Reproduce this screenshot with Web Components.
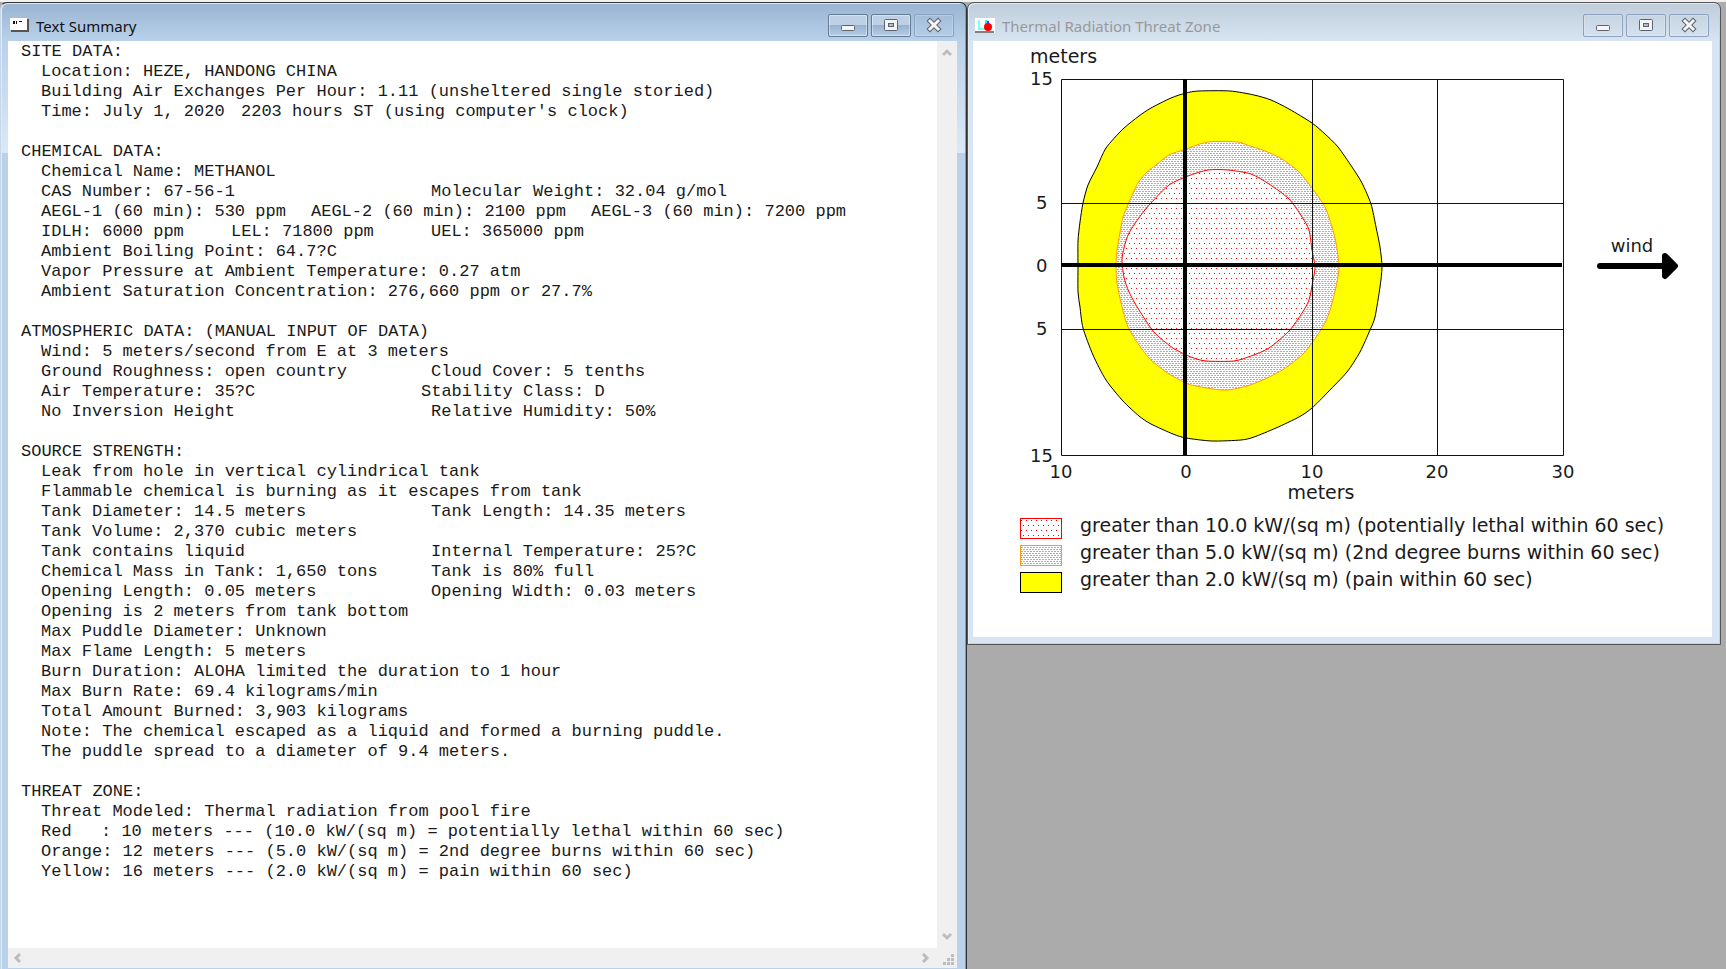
<!DOCTYPE html>
<html lang="en">
<head>
<meta charset="utf-8">
<title>ALOHA</title>
<style>
html, body {
    height: 100%;
    margin: 0;
}
body {
    background-color: #ababab;
    overflow: hidden;
}
</style>
</head>
<body>
<mdi-desktop>
    <mdi-window class="summary" active heading="Text Summary">
        <svg slot="icon" width="19" height="15" viewBox="0 0 19 15">
            <path d="M0 0h17v12H0z" fill="#fff"/>
            <path d="M17 1h2v13H1v-2h16z" fill="#555"/>
            <path d="M3 3h2v3H3zM6 3h1v3H6zM9 3h3v1H9z" fill="#111"/>
        </svg>
        <text-report></text-report>
    </mdi-window>
    <mdi-window class="threat" heading="Thermal Radiation Threat Zone">
        <svg slot="icon" width="20" height="15" viewBox="0 0 20 15">
            <path d="M0 0h20v15H0z" fill="#fff"/>
            <path d="M4 2v10M4 11h6" stroke="#0ff" stroke-width="1" fill="none"/>
            <path d="M11 2v5" stroke="#0ff" stroke-width="2"/>
            <path d="M13 3v10" stroke="#a0f" stroke-width="2"/>
            <circle cx="13" cy="9" r="4" fill="#f00"/>
            <path d="M0 14h19" stroke="#000" stroke-width="1"/>
        </svg>
        <threat-plot></threat-plot>
        <threat-legend></threat-legend>
    </mdi-window>
</mdi-desktop>

<script>
'use strict'

class MdiDesktop extends HTMLElement {

    constructor() {
        super();

        const shadow = this.attachShadow({mode: 'open'});

        shadow.innerHTML = `
            <style>
            :host {
                display: grid;
                grid-template-columns: 967fr 754fr 5px;
                align-items: start;
                height: 100%;
                box-sizing: border-box;
                border-top: 2px solid #f0f0f0;
            }
            ::slotted(.summary) {
                height: 100%;
            }
            </style>
            <slot></slot>
        `;
    }
}

class MdiWindow extends HTMLElement {

    constructor() {
        super();

        const shadow = this.attachShadow({mode: 'open'});

        shadow.innerHTML = `
            <style>
            :host {
                --frame: #d7e4f2;
                --top: #bfcddb;
                --ink: #999;
                display: flex;
                flex-direction: column;
                box-sizing: border-box;
                padding: 0 8px 7px 5px;
                border: 1px solid #555;
                border-radius: 7px 7px 0 0;
                background: linear-gradient(var(--top), var(--frame) 38px);
                box-shadow: inset 1px 1px #e3ebf3, inset -1px -1px #c5d2e0;
                min-width: 0;
            }
            :host([active]) {
                --frame: #b9d1ea;
                --top: #99b4d1;
                --ink: #111;
                padding: 0 9px 1px 7px;
                border-color: #333;
                border-bottom: 0;
                border-left-color: #c5d8ec;
                background: linear-gradient(var(--top), var(--frame) 38px, #dce8f5 150px, var(--frame) 150px);
                box-shadow: inset 1px 1px #dce8f4, inset -1px 0 #22c4dc;
            }
            header {
                display: flex;
                align-items: center;
                gap: 7px;
                height: 38px;
                padding: 6px 3px 0 2px;
                box-sizing: border-box;
                flex: none;
            }
            h1 {
                flex: 1;
                margin: 0;
                padding-top: 2px;
                font: 15px/24px "Noto Sans", "Open Sans", sans-serif;
                color: var(--ink);
                white-space: nowrap;
            }
            nav {
                display: flex;
                gap: 3px;
            }
            button {
                display: grid;
                place-items: center;
                width: 40px;
                height: 23px;
                padding: 0;
                border: 1px solid #8ea1c0;
                border-radius: 2px;
                background: none;
                box-shadow: inset 0 0 0 1px #ffffff33;
            }
            :host([active]) button:not(:last-child) {
                border-color: #667a94;
                background: linear-gradient(#bdd0e5 50%, #98b2cf 50%, #b7cee7);
                box-shadow: inset 0 0 0 1px #ffffff66;
            }
            main {
                flex: 1;
                min-height: 0;
                display: flex;
                flex-direction: column;
                background-color: #fff;
            }
            </style>
            <header>
                <slot name="icon"></slot>
                <h1></h1>
                <nav>
                    <button aria-label="Minimize">
                        <svg width="16" height="16"><rect x="1.5" y="8.5" width="13" height="5" rx="1" fill="#f5f5f5" stroke="#5c6370"/></svg>
                    </button>
                    <button aria-label="Maximize">
                        <svg width="16" height="16">
                            <rect x="1.5" y="2.5" width="13" height="11" rx="1" fill="#f5f5f5" stroke="#5c6370"/>
                            <rect x="5.5" y="6.5" width="5" height="3" fill="#a9bdd4" stroke="#5c6370"/>
                        </svg>
                    </button>
                    <button aria-label="Close">
                        <svg width="16" height="16" fill="none">
                            <path d="M4 4l8 8M12 4l-8 8" stroke="#5c6370" stroke-width="5" stroke-linecap="square"/>
                            <path d="M4 4l8 8M12 4l-8 8" stroke="#f5f5f5" stroke-width="3" stroke-linecap="square"/>
                        </svg>
                    </button>
                </nav>
            </header>
            <main><slot></slot></main>
        `;

        this.heading = shadow.querySelector('h1');
    }

    connectedCallback() {
        this.heading.textContent = this.getAttribute('heading');
    }
}

const REPORT = `SITE DATA:
  Location: HEZE, HANDONG CHINA
  Building Air Exchanges Per Hour: 1.11 (unsheltered single storied)
  Time: July 1, 2020  2203 hours ST (using computer's clock)

CHEMICAL DATA:
  Chemical Name: METHANOL
  CAS Number: 67-56-1                    Molecular Weight: 32.04 g/mol
  AEGL-1 (60 min): 530 ppm   AEGL-2 (60 min): 2100 ppm   AEGL-3 (60 min): 7200 ppm
  IDLH: 6000 ppm     LEL: 71800 ppm      UEL: 365000 ppm
  Ambient Boiling Point: 64.7?C
  Vapor Pressure at Ambient Temperature: 0.27 atm
  Ambient Saturation Concentration: 276,660 ppm or 27.7%

ATMOSPHERIC DATA: (MANUAL INPUT OF DATA)
  Wind: 5 meters/second from E at 3 meters
  Ground Roughness: open country         Cloud Cover: 5 tenths
  Air Temperature: 35?C                 Stability Class: D
  No Inversion Height                    Relative Humidity: 50%

SOURCE STRENGTH:
  Leak from hole in vertical cylindrical tank
  Flammable chemical is burning as it escapes from tank
  Tank Diameter: 14.5 meters             Tank Length: 14.35 meters
  Tank Volume: 2,370 cubic meters
  Tank contains liquid                   Internal Temperature: 25?C
  Chemical Mass in Tank: 1,650 tons      Tank is 80% full
  Opening Length: 0.05 meters            Opening Width: 0.03 meters
  Opening is 2 meters from tank bottom
  Max Puddle Diameter: Unknown
  Max Flame Length: 5 meters
  Burn Duration: ALOHA limited the duration to 1 hour
  Max Burn Rate: 69.4 kilograms/min
  Total Amount Burned: 3,903 kilograms
  Note: The chemical escaped as a liquid and formed a burning puddle.
  The puddle spread to a diameter of 9.4 meters.

THREAT ZONE:
  Threat Modeled: Thermal radiation from pool fire
  Red   : 10 meters --- (10.0 kW/(sq m) = potentially lethal within 60 sec)
  Orange: 12 meters --- (5.0 kW/(sq m) = 2nd degree burns within 60 sec)
  Yellow: 16 meters --- (2.0 kW/(sq m) = pain within 60 sec)`;

// width of one character cell of the report
const CELL = 10;

class TextReport extends HTMLElement {

    constructor() {
        super();

        const shadow = this.attachShadow({mode: 'open'});

        shadow.innerHTML = `
            <style>
            :host {
                flex: 1;
                min-height: 0;
                display: grid;
                grid-template: minmax(0, 1fr) 20px / minmax(0, 1fr) 20px;
                background-color: #f0f0f0;
            }
            .report {
                padding: 1px 0 0 13px;
                overflow: hidden;
                background-color: #fff;
                color: #1a1a1a;
                font: 17px/20px "Liberation Mono", monospace;
                white-space: pre;
            }
            .line {
                display: flex;
                min-height: 20px;
            }
            .line span {
                flex: none;
            }
            .bar {
                display: flex;
                justify-content: space-between;
                align-items: center;
                padding: 7px 4px;
            }
            .bar.across {
                padding: 0 7px 0 5px;
            }
            .bar.down {
                flex-direction: column;
            }
            button {
                display: flex;
                padding: 0;
                border: 0;
                background: none;
            }
            path {
                fill: none;
                stroke: #bdbdbd;
                stroke-width: 3;
            }
            .grip {
                margin: 6px 0 0 6px;
            }
            .grip path {
                fill: #bdbdbd;
                stroke: none;
            }
            </style>
            <div class="report"></div>
            <div class="bar down">
                <button aria-label="Scroll up"><svg width="10" height="9"><path d="M1 7l4-4 4 4"/></svg></button>
                <button aria-label="Scroll down"><svg width="10" height="9"><path d="M1 2l4 4 4-4"/></svg></button>
            </div>
            <div class="bar across">
                <button aria-label="Scroll left"><svg width="9" height="10"><path d="M7 1L3 5l4 4"/></svg></button>
                <button aria-label="Scroll right"><svg width="9" height="10"><path d="M2 1l4 4-4 4"/></svg></button>
            </div>
            <svg class="grip" width="11" height="11"><path d="M8 0h3v3H8zM8 4h3v3H8zM4 4h3v3H4zM8 8h3v3H8zM4 8h3v3H4zM0 8h3v3H0z"/></svg>
        `;

        // text followed by a run of spaces becomes a column, so the next one starts on its cell
        shadow.querySelector('.report').innerHTML = REPORT.split('\n').map(line => {
            const indent = line.search(/\S|$/) * CELL;
            const parts = line.trim().match(/\S+(?: \S+)* */g) || [];
            const spans = parts.map((part, i) => {
                const width = i < parts.length - 1 ? `${part.length * CELL}px` : 'auto';
                return `<span style="width: ${width}">${part.trimEnd()}</span>`;
            });

            return `<div class="line" style="padding-left: ${indent}px">${spans.join('')}</div>`;
        }).join('');
    }
}

// hatch fills, shared by the plot and the legend swatches
const HATCHES = `
    <defs>
        <pattern id="red" width="5" height="10" patternUnits="userSpaceOnUse">
            <path d="M0 0h5v10H0z" fill="#fff"/>
            <path d="M1 2h1v1H1zM3 7h1v1H3z" fill="#f00"/>
        </pattern>
        <pattern id="orange" width="3" height="4" patternUnits="userSpaceOnUse">
            <path d="M0 0h3v4H0z" fill="#fff"/>
            <path d="M0 0h2v1H0zM1 2h2v1H1z" fill="#ffa020"/>
        </pattern>
    </defs>
`;

const YELLOW = [
    [226, 50], [257, 50], [281, 54], [298, 59], [316, 68], [339, 82], [352, 93], [365, 106],
    [379, 126], [389, 142], [398, 163], [403, 186], [407, 206], [409, 226], [407, 246], [402, 276],
    [397, 289], [387, 311], [374, 331], [355, 351], [339, 367], [326, 376], [303, 387], [281, 396],
    [268, 399], [239, 400], [213, 397], [200, 393], [178, 383], [166, 375], [150, 360], [133, 339],
    [120, 314], [110, 287], [107, 266], [105, 251], [105, 226], [105, 200], [107, 181], [110, 162],
    [115, 144], [124, 126], [133, 107], [150, 88], [166, 75], [178, 67], [198, 57], [213, 52]
];
const ORANGE = [
    [235, 101], [265, 101], [274, 104], [292, 110], [309, 118], [326, 131], [339, 147], [352, 166],
    [359, 186], [363, 202], [366, 226], [363, 246], [358, 266], [352, 282], [339, 302], [329, 314],
    [311, 328], [292, 338], [274, 345], [255, 349], [240, 348], [218, 344], [211, 341], [196, 333],
    [178, 319], [166, 304], [155, 286], [149, 266], [144, 242], [143, 226], [144, 209], [147, 192],
    [150, 176], [157, 159], [165, 142], [174, 131], [183, 124], [196, 114], [213, 108]
];
const RED = [
    [235, 129], [255, 129], [278, 133], [296, 143], [316, 158], [329, 176], [336, 189], [339, 209],
    [342, 226], [340, 239], [336, 259], [329, 272], [316, 290], [296, 307], [278, 315], [261, 320],
    [233, 320], [218, 316], [200, 307], [181, 291], [166, 269], [156, 251], [151, 236], [149, 219],
    [151, 207], [156, 192], [168, 174], [178, 162], [196, 144], [215, 135]
];

// closed smooth curve through the points
function contour(points) {
    const n = points.length;
    const at = i => points[(i + n) % n];
    let d = `M${points[0]}`;

    points.forEach((p, i) => {
        const prev = at(i - 1);
        const next = at(i + 1);
        const after = at(i + 2);
        const c1 = [p[0] + (next[0] - prev[0]) / 8, p[1] + (next[1] - prev[1]) / 8];
        const c2 = [next[0] - (after[0] - p[0]) / 8, next[1] - (after[1] - p[1]) / 8];
        d += `C${c1} ${c2} ${next}`;
    });

    return d + 'z';
}

class ThreatPlot extends HTMLElement {

    constructor() {
        super();

        const shadow = this.attachShadow({mode: 'open'});

        shadow.innerHTML = `
            <style>
            :host {
                display: block;
            }
            svg {
                display: block;
                width: 100%;
            }
            text {
                font: 18px "DejaVu Sans", sans-serif;
                fill: #1a1a1a;
            }
            .unit {
                font-size: 19px;
            }
            .middle {
                text-anchor: middle;
            }
            .grid {
                fill: none;
                stroke: #111;
            }
            .axis {
                stroke: #000;
                stroke-width: 4;
            }
            </style>
            <svg viewBox="0 0 739 466" role="img" aria-label="Thermal radiation threat zone, meters">
                ${HATCHES}
                <path fill="#ff0" stroke="#000" d="${contour(YELLOW)}"/>
                <path fill="url(#orange)" stroke="#ff9a10" d="${contour(ORANGE)}"/>
                <path fill="url(#red)" stroke="#f00" d="${contour(RED)}"/>
                <path class="grid" d="M88.5 38.5h502v376h-502zM339.5 38v377M464.5 38v377M88 162.5h502M88 288.5h502"/>
                <path class="axis" d="M212 38v376M88 224h501"/>
                <text class="unit" x="57" y="22">meters</text>
                <g>
                    <text x="57" y="44">15</text>
                    <text x="63" y="168">5</text>
                    <text x="63" y="231">0</text>
                    <text x="63" y="294">5</text>
                    <text x="57" y="421">15</text>
                </g>
                <g class="middle">
                    <text x="88" y="437">10</text>
                    <text x="213" y="437">0</text>
                    <text x="339" y="437">10</text>
                    <text x="464" y="437">20</text>
                    <text x="590" y="437">30</text>
                    <text class="unit" x="348" y="458">meters</text>
                    <text x="659" y="211">wind</text>
                </g>
                <path d="M627 225h65" stroke="#000" stroke-width="6" stroke-linecap="round"/>
                <path d="M692 215l10 10-10 10z" stroke="#000" stroke-width="6" stroke-linejoin="round"/>
            </svg>
        `;
    }
}

class ThreatLegend extends HTMLElement {

    constructor() {
        super();

        const shadow = this.attachShadow({mode: 'open'});
        const entries = [
            ['url(#red)', '#f00', 'greater than 10.0 kW/(sq m) (potentially lethal within 60 sec)'],
            ['url(#orange)', '#ff9a10', 'greater than 5.0 kW/(sq m) (2nd degree burns within 60 sec)'],
            ['#ff0', '#000', 'greater than 2.0 kW/(sq m) (pain within 60 sec)']
        ];

        shadow.innerHTML = `
            <style>
            :host {
                display: block;
                padding: 7px 0 44px 47px;
            }
            ul {
                display: grid;
                gap: 2px;
                margin: 0;
                padding: 0;
                list-style: none;
            }
            li {
                display: flex;
                gap: 18px;
                font: 19px/23px "DejaVu Sans", sans-serif;
                color: #1a1a1a;
                white-space: nowrap;
            }
            li svg {
                flex: none;
                margin-top: 4px;
            }
            </style>
            <ul></ul>
        `;

        const list = shadow.querySelector('ul');

        entries.forEach(([fill, stroke, label]) => {
            list.innerHTML += `
                <li>
                    <svg width="42" height="21">${HATCHES}<rect x="0.5" y="0.5" width="41" height="20" fill="${fill}" stroke="${stroke}"/></svg>
                    <span>${label}</span>
                </li>
            `;
        });
    }
}

customElements.define('mdi-desktop', MdiDesktop);
customElements.define('mdi-window', MdiWindow);
customElements.define('text-report', TextReport);
customElements.define('threat-plot', ThreatPlot);
customElements.define('threat-legend', ThreatLegend);
</script>
</body>
</html>
